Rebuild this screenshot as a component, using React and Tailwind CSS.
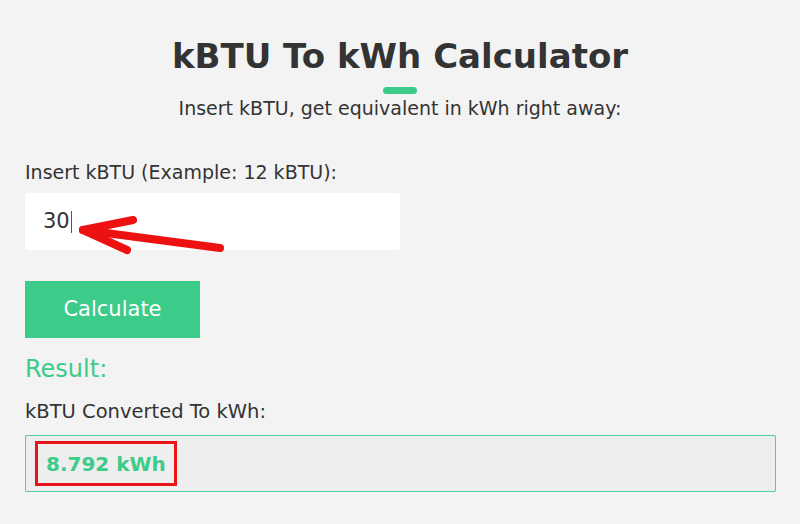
import React from "react";

function Arrow() {
  return (
    <svg
      className="absolute left-0 top-0 pointer-events-none"
      width="400"
      height="80"
      viewBox="0 0 400 80"
    >
      <g stroke="#ee1111" strokeWidth="8" strokeLinecap="round" fill="none">
        <line x1="58" y1="37" x2="195" y2="55" />
        <line x1="58" y1="37" x2="108" y2="27" />
        <line x1="58" y1="37" x2="102" y2="57" />
      </g>
    </svg>
  );
}

export default function App() {
  return (
    <div
      className="w-[800px] h-[524px] bg-[#f3f3f3] text-[#333] overflow-hidden"
      style={{ fontFamily: '"DejaVu Sans", "Open Sans", sans-serif' }}
    >
      <div className="flex flex-col items-center pt-[33px]">
        <h1 className="text-[34px] font-bold leading-[46px]">
          kBTU To kWh Calculator
        </h1>
        <div className="mt-[8px] w-[34px] h-[7px] rounded-full bg-[#3ccb88]" />
        <p className="mt-[1px] text-[19px] leading-[26px]">
          Insert kBTU, get equivalent in kWh right away:
        </p>
      </div>

      <div className="px-[25px] pt-[39px]">
        <label className="block text-[19px] leading-[24px]">
          Insert kBTU (Example: 12 kBTU):
        </label>
        <div className="relative mt-[9px] w-[375px] h-[57px] bg-white rounded-[3px] flex items-center pl-[18px]">
          <span className="text-[21px]">30</span>
          <span className="ml-[1px] w-px h-[22px] bg-[#555]" />
          <Arrow />
        </div>

        <button className="mt-[31px] w-[175px] h-[57px] bg-[#3ccb88] text-white text-[21px] flex items-center justify-center">
          Calculate
        </button>

        <div className="mt-[16px] text-[24px] leading-[30px] text-[#3ccb88]">
          Result:
        </div>

        <div className="mt-[16px] text-[19.5px] leading-[24px]">
          kBTU Converted To kWh:
        </div>

        <div className="mt-[11px] w-[751px] h-[57px] ring-1 ring-inset ring-[#4fd095] bg-[#eeeeee] rounded-[2px] flex items-center pl-[10px]">
          <div className="h-[45px] border-[3px] border-[#e8141a] flex items-center px-[8px]">
            <span className="text-[20px] font-bold text-[#3ccb88]">8.792 kWh</span>
          </div>
        </div>
      </div>
    </div>
  );
}
